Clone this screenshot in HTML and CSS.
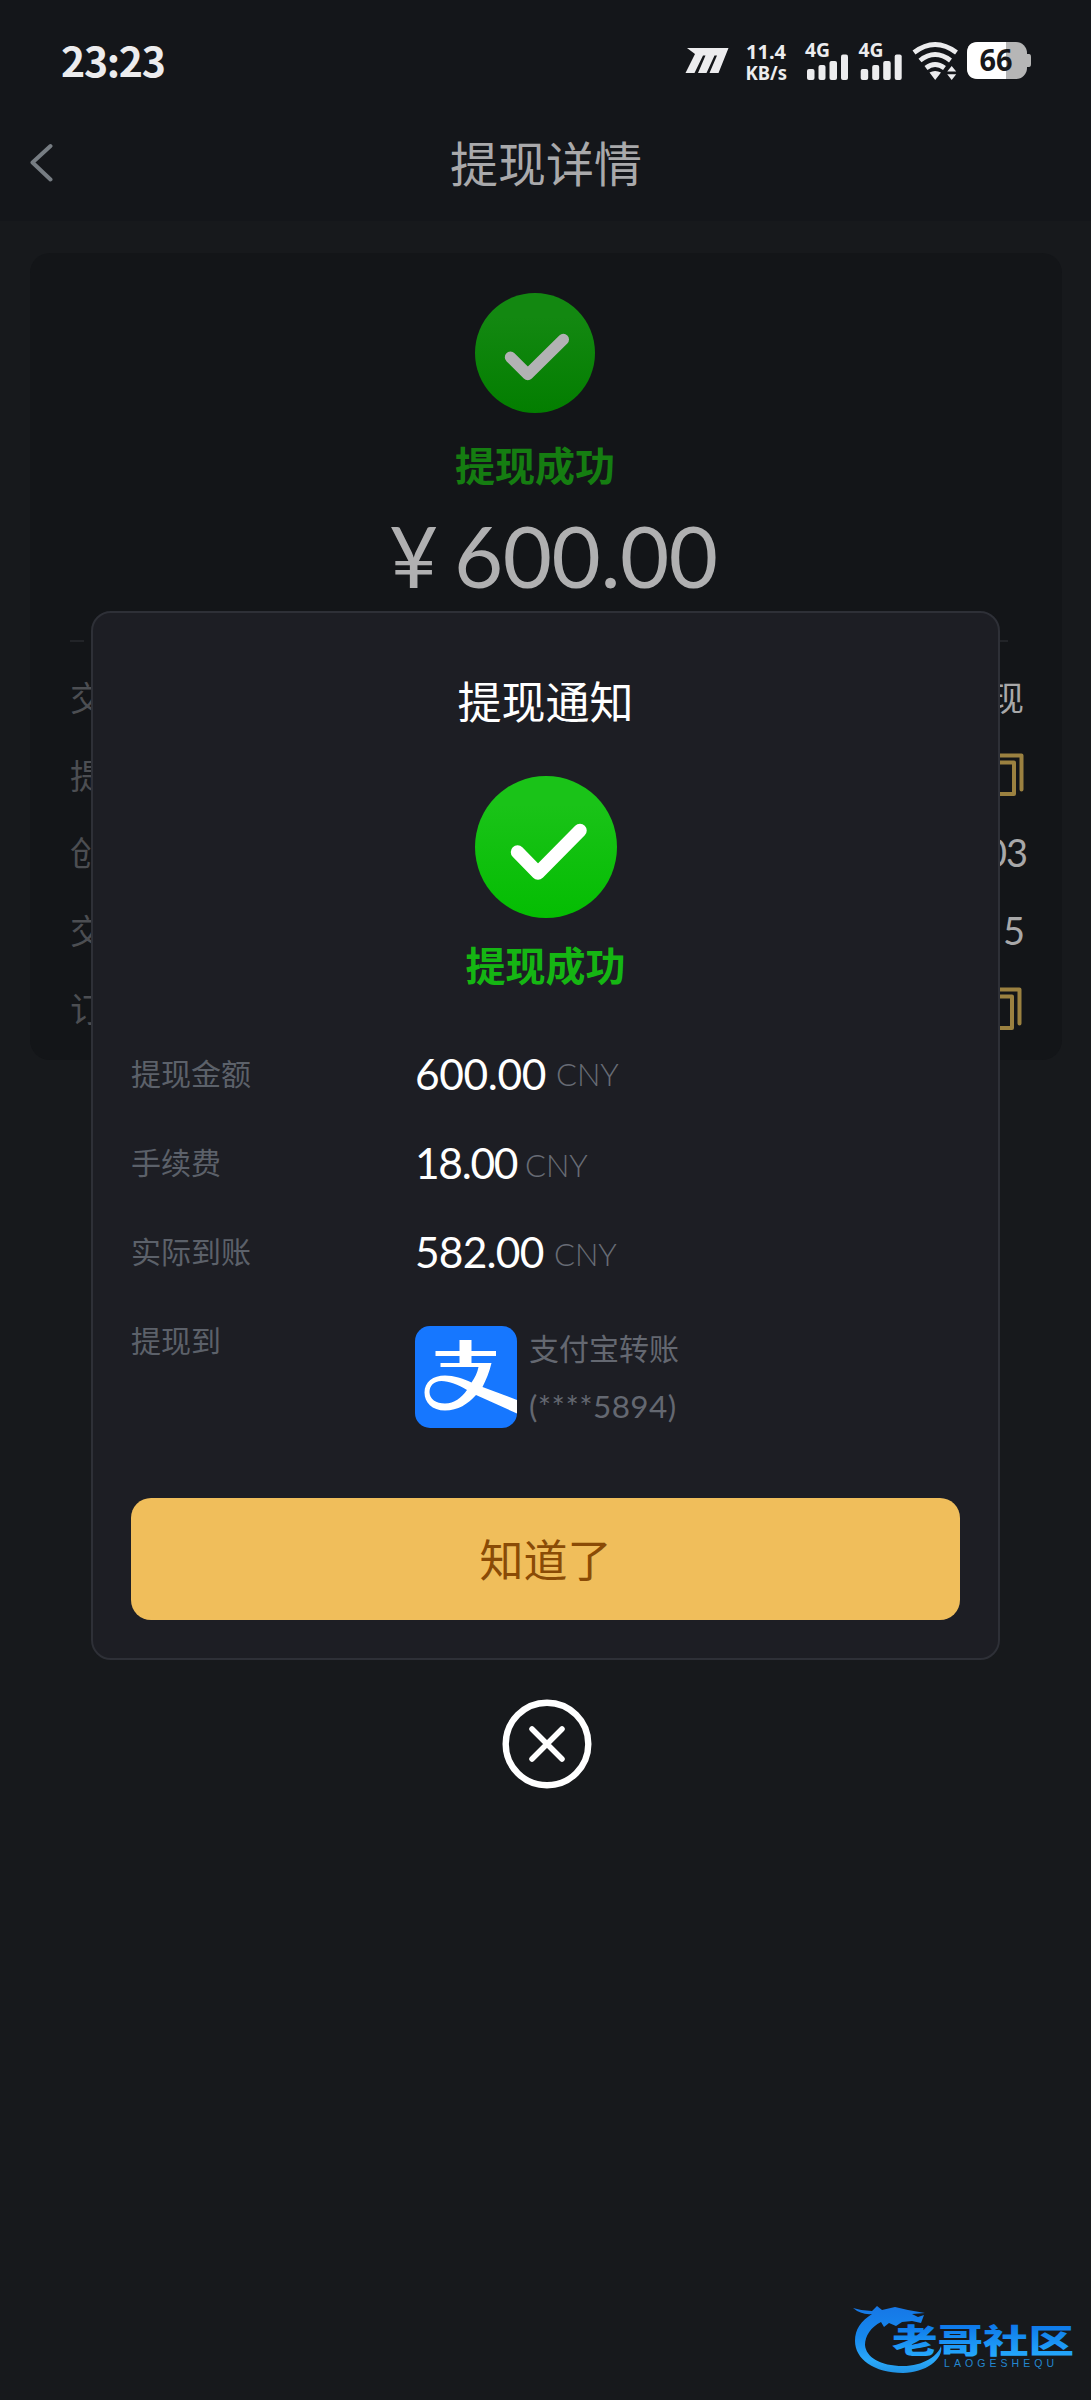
FILE: index.html
```html
<!DOCTYPE html>
<html lang="zh-CN">
<head>
<meta charset="utf-8">
<title>提现详情</title>
<link rel="stylesheet" href="styles.css">
</head>
<body>
<div class="screen">
  <div class="topbar">
    <div class="status">
      <span class="clock">23:23</span>
      <svg class="status-icons" viewBox="680 30 360 60" fill="#ececee">
        <path d="M687 48H728.500L718.500 73H709.500L717 55.500H714.500L706.500 73H698L705.500 55.500H703L694.500 73H685.500L695 54Z"/>
        <g class="net">
          <text x="746" y="58.500" textLength="40" lengthAdjust="spacingAndGlyphs">11.4</text>
          <text x="745.500" y="79.500" textLength="41.500" lengthAdjust="spacingAndGlyphs">KB/s</text>
          <text x="805" y="57" textLength="25" lengthAdjust="spacingAndGlyphs">4G</text>
          <text x="858.500" y="57" textLength="25" lengthAdjust="spacingAndGlyphs">4G</text>
        </g>
        <g id="bars">
          <rect x="807" y="69" width="7.500" height="11" rx="2"/>
          <rect x="818.500" y="65" width="7" height="15" rx="2"/>
          <rect x="829.500" y="61" width="7.500" height="19" rx="2"/>
          <rect x="841" y="54.500" width="7" height="25.500" rx="2"/>
        </g>
        <use href="#bars" x="53.700"/>
        <g fill="none" stroke="#ececee" stroke-width="4.800">
          <path d="M914 52.500Q935 36.500 956.500 52.500"/>
          <path d="M920 60.500Q935 48.500 950.500 60.500"/>
          <path d="M926 68Q935 61 944.500 68"/>
        </g>
        <path d="M929.500 72.500Q935 69.500 941 72.500L935.200 80ZM947.200 71.500H956.200L951.700 66ZM947.200 74.200H956.200L951.700 80Z"/>
        <rect x="967" y="42" width="60" height="37" rx="11" fill="#b6b6b6"/>
        <path d="M1006 42H978Q967 42 967 53V68Q967 79 978 79H1006Z" fill="#fff"/>
        <path d="M1027 54H1029Q1031 54 1031 57V64Q1031 67 1029 67H1027Z" fill="#b6b6b6"/>
        <text class="level" x="979.500" y="71" textLength="33" lengthAdjust="spacingAndGlyphs">66</text>
      </svg>
    </div>
    <div class="nav">
      <svg class="back" viewBox="0 0 26 42"><path d="M20.500 4L2.500 20.500L20.500 37.500" fill="none" stroke="#777d83" stroke-width="4" stroke-linecap="round" stroke-linejoin="round"/></svg>
      <h1>提现详情</h1>
    </div>
  </div>

  <div class="card">
    <div class="hero">
      <svg class="check-sm" viewBox="0 0 142 142">
        <defs><linearGradient id="g1" x1="0" y1="0" x2="0" y2="1"><stop offset="0.200" stop-color="#138811"/><stop offset="1" stop-color="#037e00"/></linearGradient></defs>
        <circle cx="71" cy="71" r="71" fill="url(#g1)"/>
        <path d="M42 76L62.500 96.500L104.500 55" fill="none" stroke="#b2b2b4" stroke-width="13.500" stroke-linecap="round" stroke-linejoin="round"/>
      </svg>
      <div class="state">提现成功</div>
    </div>
    <div class="amount"><span class="yen">¥</span><span>600.00</span></div>
    <div class="divider"></div>
    <div class="row"><span class="k">交</span><span class="v">现</span></div>
    <div class="row"><span class="k">提</span><svg class="copy" viewBox="0 0 40 46"><path d="M4 3.500H37.500V37.500M2 10.500H30V42H2Z" fill="none" stroke="#9b8140" stroke-width="4" stroke-linecap="round" stroke-linejoin="round"/></svg></div>
    <div class="row"><span class="k">创</span><span class="v num">03</span></div>
    <div class="row"><span class="k">交</span><span class="v num five">5</span></div>
    <div class="row"><span class="k">订</span><svg class="copy low" viewBox="0 0 40 46"><path d="M4 3.500H37.500V37.500M2 10.500H30V42H2Z" fill="none" stroke="#9b8140" stroke-width="4" stroke-linecap="round" stroke-linejoin="round"/></svg></div>
  </div>

  <div class="overlay">
    <div class="modal">
      <h2>提现通知</h2>
      <svg class="check-lg" viewBox="0 0 142 142">
        <defs><linearGradient id="g2" x1="0" y1="0" x2="0" y2="1"><stop offset="0.200" stop-color="#1ac318"/><stop offset="1" stop-color="#04bd02"/></linearGradient></defs>
        <circle cx="71" cy="71" r="71" fill="url(#g2)"/>
        <path d="M42.500 76L63 97L105 54.500" fill="none" stroke="#fff" stroke-width="13.500" stroke-linecap="round" stroke-linejoin="round"/>
      </svg>
      <div class="state bright">提现成功</div>
      <dl class="details">
        <div class="item"><dt>提现金额</dt><dd><b>600.00</b><i class="raised">CNY</i></dd></div>
        <div class="item"><dt>手续费</dt><dd><b class="fee">18.00</b><i>CNY</i></dd></div>
        <div class="item"><dt>实际到账</dt><dd><b class="net-sum">582.00</b><i>CNY</i></dd></div>
        <div class="item payee"><dt>提现到</dt><dd>
          <svg class="alipay" viewBox="0 0 102 102">
            <defs><clipPath id="tile"><rect width="102" height="102" rx="15"/></clipPath></defs>
            <g clip-path="url(#tile)">
              <rect width="102" height="102" fill="#1677ff"/>
              <path d="M44.500 14H56.500V25H81V30H56.500V37H76.500C74.500 46 71 54 67.500 61L102 74V87.500L61 69C53 78 43 84.500 30 84.500C17 84.500 9.500 76.500 9.500 66.500C9.500 56 18 49.500 30 49.500C39 49.500 48 52.500 56.500 56.500C60 51.500 62.500 46.500 63.500 41H25.500V37H44.500V30H20.500V25H44.500ZM52 64C43 58.500 34 55 26.500 55C18.500 55 14.500 60 14.500 66C14.500 73 21 77.500 30 77.500C39.500 77.500 46 72 52 64Z" fill="#fff" fill-rule="evenodd"/>
            </g>
          </svg>
          <div class="account"><span>支付宝转账</span><span class="tail">(****5894)</span></div>
        </dd></div>
      </dl>
      <button class="ok">知道了</button>
    </div>
    <svg class="close" viewBox="0 0 90 90"><circle cx="45" cy="45" r="41.300" fill="none" stroke="#fff" stroke-width="6.400"/><path d="M30 30L60 60M60 30L30 60" stroke="#fff" stroke-width="5.500" stroke-linecap="round"/></svg>
  </div>

  <svg class="brand" viewBox="840 2290 251 110">
    <defs><linearGradient id="g3" gradientUnits="userSpaceOnUse" x1="0" y1="2306" x2="0" y2="2374"><stop offset="0" stop-color="#1677e6"/><stop offset="0.450" stop-color="#1688ee"/><stop offset="0.800" stop-color="#2aa9fa"/><stop offset="1" stop-color="#2191e2"/></linearGradient>
    <linearGradient id="g4" x1="0" y1="0" x2="0" y2="1"><stop offset="0.200" stop-color="#0d78ea"/><stop offset="1" stop-color="#2ab2ff"/></linearGradient></defs>
    <path fill="url(#g3)" d="M853 2308Q862 2311 872 2311L877 2306L882 2310L895 2307L908 2310L925 2313L912 2314L918 2317L924 2315L921 2323L912 2321L902 2322L896 2326L889 2323L884 2327L881 2322C871 2327 865 2336 865 2345C866 2357 880 2366 903 2366C923 2366 938 2356 941 2346C944 2359 925 2373 903 2373C874 2373 855 2359 855 2341C855 2329 861 2321 872 2314Q861 2315 853 2308Z"/>
    <g fill="url(#g4)" class="brand-text">
      <text x="892" y="2353" font-size="33" textLength="182" lengthAdjust="spacingAndGlyphs">老哥社区</text>
    </g>
    <text class="brand-sub" x="944" y="2366.500" textLength="110" lengthAdjust="spacing">LAOGESHEQU</text>
  </svg>
</div>
</body>
</html>
```
FILE: styles.css
```css
* { box-sizing: border-box; }
body {
  margin: 0;
  background: #17191c;
  font-family: Lato, "Noto Sans CJK SC", sans-serif;
}
h1, h2, dl, dd { margin: 0; font-weight: 400; }
svg { display: block; flex: none; }
.screen { position: relative; width: 1091px; height: 2400px; overflow: hidden; }

.topbar { height: 221px; background: #14161a; }
.status {
  height: 118px;
  padding: 0 51px 0 61px;
  display: flex;
  align-items: center;
  justify-content: space-between;
}
.clock { font: 700 41px/60px "Noto Sans CJK SC", sans-serif; color: #ececee; letter-spacing: -1.3px; }
.status-icons { width: 360px; height: 60px; margin-top: 2px; }
.net { font: 700 20px "Noto Sans", sans-serif; }
.level { font: 700 31px "Open Sans", sans-serif; fill: #17181b; }
.nav { height: 91px; padding: 0 29px 0 30px; display: grid; grid-template-columns: 26px 1fr 26px; align-items: center; }
.back { width: 26px; height: 42px; margin-top: -2px; }
.nav h1 { text-align: center; font-size: 48px; line-height: 60px; color: #a9a9ab; }

.card { margin: 32px 29px 0 30px; height: 807px; padding: 40px 38px 0 40px; border-radius: 20px; background: #131518; }
.hero { display: flex; flex-direction: column; align-items: center; padding-right: 24px; }
.check-sm { width: 120px; height: 120px; }
.state { margin-top: 28px; font-size: 40px; line-height: 50px; font-weight: 700; color: #157d11; }
.amount { display: flex; margin: 14px 0 0 319px; font-size: 85px; line-height: 100px; color: #b0b0b1; letter-spacing: -0.5px; }
.yen { width: 65px; }
.divider { height: 2px; margin: 35px 10px 16px 0; background: repeating-linear-gradient(90deg, #222428 0 14px, transparent 14px 21px); }
.row { display: flex; justify-content: space-between; align-items: center; height: 77.8px; font-size: 34.5px; }
.k, .v { margin-top: -2px; }
.k { color: #4c4e52; }
.v { color: #a8a8a9; }
.num { font-size: 38px; margin: 0 -3px 0 0; letter-spacing: -1px; }
.five { margin-right: 0; }
.copy { width: 40px; height: 46px; margin-bottom: -1px; }
.low { margin-right: 2px; }

.overlay { position: absolute; inset: 0; padding: 611px 0 0 91px; }
.modal {
  width: 909px;
  height: 1049px;
  padding: 0 38px;
  border: 2px solid #2e3037;
  border-radius: 20px;
  background: #1d1e24;
  display: flex;
  flex-direction: column;
  align-items: center;
}
.modal h2 { margin-top: 61px; font-size: 44px; line-height: 56px; color: #fff; }
.check-lg { width: 142px; height: 142px; margin-top: 46px; }
.state.bright { margin-top: 23px; color: #15b613; }
.details { width: 100%; margin-top: 38px; }
.item { display: flex; align-items: center; height: 89px; }
.item dt { width: 284px; margin-top: -3px; font-size: 30px; color: #5c616a; }
.item dd { display: flex; align-items: center; }
.item b { width: 131px; font-size: 42.5px; font-weight: 400; line-height: 50px; color: #fff; letter-spacing: -0.4px; }
.item .fee { width: 100px; letter-spacing: -1.3px; }
.item .net-sum { width: 129px; letter-spacing: -0.8px; }
.item i { font-size: 31px; font-weight: 300; font-style: normal; line-height: 40px; color: #686c75; margin: 5px 0 0 10px; }
.item i.raised { margin-top: 0; }
.payee { align-items: flex-start; height: 110px; padding-top: 30px; }
.payee dt { line-height: 34px; }
.payee dd { align-items: flex-start; }
.alipay { width: 102px; height: 102px; }
.account { display: flex; flex-direction: column; gap: 18px; margin-left: 12px; font-size: 30px; line-height: 40px; padding-top: 2px; color: #646871; }
.tail { font-size: 31.5px; letter-spacing: 0.4px; }
.ok {
  width: 829px;
  height: 122px;
  margin-top: 92px;
  padding: 0 0 2px;
  border: 0;
  border-radius: 20px;
  background: #f0be5b;
  color: #8a4b06;
  font: 400 44px "Noto Sans CJK SC", sans-serif;
}
.close { width: 90px; height: 90px; margin: 39px 0 0 411px; }

.brand { position: absolute; left: 840px; top: 2290px; width: 251px; height: 110px; }
.brand-text { font-family: "Noto Sans CJK SC", sans-serif; font-weight: 900; }
.brand-sub { font: 400 10.500px "Liberation Sans", sans-serif; fill: #2387cf; }
```
